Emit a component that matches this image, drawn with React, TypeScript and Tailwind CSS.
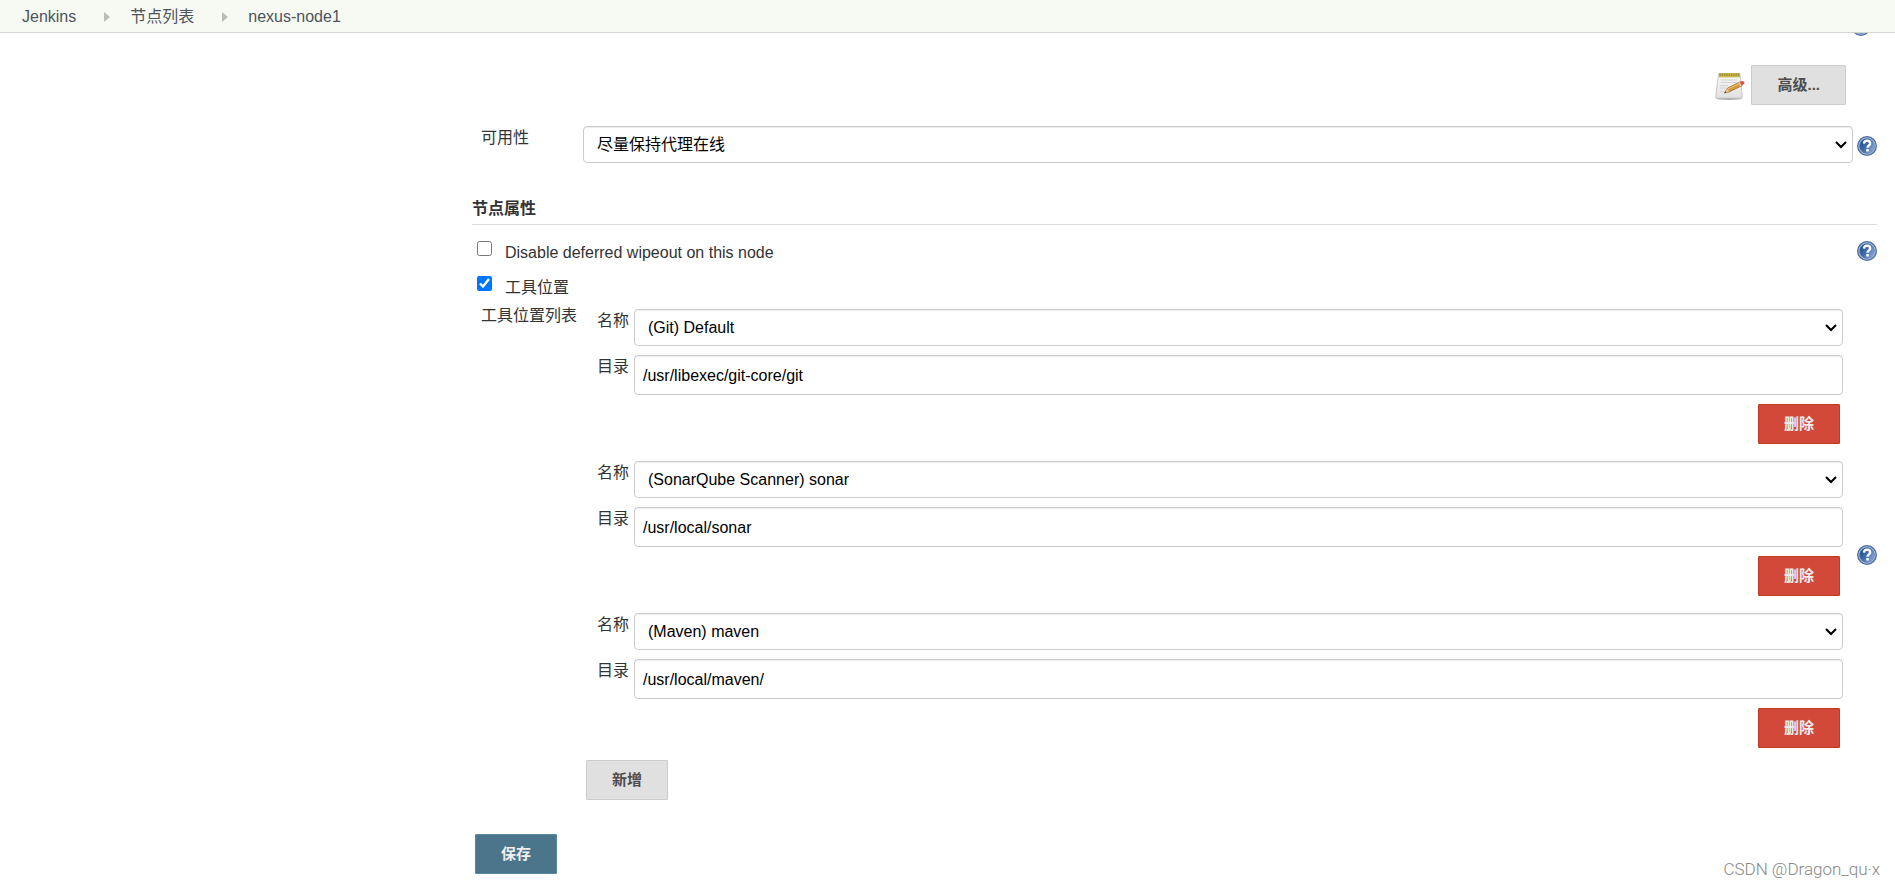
import { useId, useState } from "react";
import type { ComponentProps } from "react";

const crumbs = ["Jenkins", "节点列表", "nexus-node1"];

const initialTools = [
  { name: "(Git) Default", home: "/usr/libexec/git-core/git" },
  { name: "(SonarQube Scanner) sonar", home: "/usr/local/sonar" },
  { name: "(Maven) maven", home: "/usr/local/maven/" },
];

const toolNames = initialTools.map((t) => t.name);

const field =
  "w-full rounded border border-[#ccc] bg-white text-base text-black shadow-[inset_0_1px_1px_rgba(0,0,0,0.075)]";
const button = "h-10 rounded-[1px] border px-[25px] text-[15px] font-bold";

function HelpIcon() {
  const id = useId();
  return (
    <svg viewBox="0 0 20 20" className="block size-5" aria-hidden="true">
      <defs>
        <linearGradient id={id} x1="0" y1="0.2" x2="1" y2="0.8">
          <stop offset="0" stopColor="#1f4c8f" />
          <stop offset="0.5" stopColor="#4470ad" />
          <stop offset="1" stopColor="#8fb0da" />
        </linearGradient>
      </defs>
      <circle cx="10" cy="10" r="9.3" fill="#b3c6e0" stroke="#48699b" strokeWidth="1.3" />
      <circle cx="10" cy="10" r="7.5" fill={`url(#${id})`} stroke="#5f82b3" strokeWidth="0.6" />
      <path
        d="M7 7.600C7.100 5.600 8.300 4.700 10.100 4.700c1.800 0 3.100 1 3.100 2.700 0 2.100-2.700 2.100-2.700 4.400"
        fill="none"
        stroke="#fff"
        strokeWidth="2.300"
      />
      <rect x="9.200" y="13.100" width="2.600" height="2.400" fill="#fff" />
    </svg>
  );
}

function HelpLink() {
  return (
    <a href="#help" aria-label="帮助" className="block w-5 shrink-0">
      <HelpIcon />
    </a>
  );
}

function NotepadIcon() {
  return (
    <svg viewBox="0 0 30 28" className="h-7 w-[30px]" aria-hidden="true">
      <defs>
        <linearGradient id="paper" x1="0" y1="0" x2="0" y2="1">
          <stop offset="0" stopColor="#fbfbfa" />
          <stop offset="1" stopColor="#dfe0df" />
        </linearGradient>
      </defs>
      <ellipse cx="14" cy="26.6" rx="13" ry="1.300" fill="#a9a9a7" />
      <path
        d="M3.500 2h21.500l2.300 23.200a1 1 0 0 1-1 1H1.700a1 1 0 0 1-1-1z"
        fill="url(#paper)"
        stroke="#bdbdbb"
        strokeWidth="0.8"
      />
      <path d="M4 1h21v4.400H4z" fill="#cbb950" />
      <path d="M4.500 2.700h20" stroke="#a08f35" strokeWidth="2.600" strokeDasharray="1.300 1" />
      <path d="M5.500 8h17M5.500 10.500h16M5 13.500h8M5 16h6M5 19.500h4" stroke="#d0d3d3" strokeWidth="1.200" />
      <path d="M9.500 20.800l3-4.700L25.200 9.800l1.900 3.800L14 20z" fill="#d99a3f" stroke="#a06a28" strokeWidth="0.8" />
      <path d="M13 16.900L25.500 10.900" stroke="#efc47c" strokeWidth="1" />
      <path d="M9.500 21l2.700-4.400 1.800 2.900z" fill="#dcc9a2" />
      <path d="M9 21.400l1.500-2.200 1 1.400z" fill="#444" />
      <path d="M24.100 10.400l1.700 3.600" stroke="#d8d5cf" strokeWidth="1.300" />
      <path d="M25.200 9.800l2-.8c1.600-.4 2.900 1.700 1.900 3.100l-2.300 1.400z" fill="#e0524a" />
    </svg>
  );
}

function Separator() {
  return (
    <svg viewBox="0 0 6 10" className="mr-5 ml-7 h-[10px] w-[6px]" aria-hidden="true">
      <path d="M0 0l6 5-6 5z" fill="#babdb6" />
    </svg>
  );
}

function Select(props: ComponentProps<"select">) {
  return (
    <div className="relative flex-1">
      <select {...props} className={`${field} block h-[37px] appearance-none pt-px pr-8 pl-[13px]`} />
      <svg
        viewBox="0 0 12 8"
        className="pointer-events-none absolute top-[15px] right-[6px] h-2 w-3"
        aria-hidden="true"
      >
        <path d="M1 1l5 5 5-5" fill="none" stroke="#000" strokeWidth="2.100" />
      </svg>
    </div>
  );
}

export default function App() {
  const [tools, setTools] = useState(initialTools);
  const [wipeout, setWipeout] = useState(false);
  const [locations, setLocations] = useState(true);

  const update = (i: number, patch: Partial<(typeof initialTools)[number]>) =>
    setTools((list) => list.map((t, n) => (n === i ? { ...t, ...patch } : t)));

  return (
    <div className="relative min-h-screen bg-white font-['Liberation_Sans','Noto_Sans_CJK_SC',sans-serif] text-base leading-6 text-[#333]">
      <header className="fixed inset-x-0 top-0 z-10 flex h-[33px] items-center border-b border-[#d3d7cf] bg-[#f6faf2] pt-px pl-[22px] text-[#4d545d]">
        {crumbs.map((c, i) => (
          <div key={c} className="flex items-center">
            {i > 0 && <Separator />}
            <a href="#crumb">{c}</a>
          </div>
        ))}
      </header>

      <main className="pt-4 pr-[18px] pl-[472px]">
        <div className="flex justify-end pr-[6px]">
          <HelpLink />
        </div>

        <div className="mt-[29px] flex items-center justify-end gap-[6px] pr-[31px]">
          <div className="pt-[2px]">
            <NotepadIcon />
          </div>
          <button type="button" className={`${button} border-[#ccc] bg-[#e0e0e0] text-[#4d4d4d]`}>
            高级...
          </button>
        </div>

        <div className="mt-[21px] flex items-start">
          <label htmlFor="availability" className="w-[111px] pl-[9px]">
            可用性
          </label>
          <Select id="availability">
            <option>尽量保持代理在线</option>
          </Select>
          <div className="pt-[10px] pl-1">
            <HelpLink />
          </div>
        </div>

        <h2 className="mt-[34px] border-b border-[#ddd] pb-[3px] font-bold">节点属性</h2>

        <div className="mt-4 flex items-start">
          <input
            id="wipeout"
            type="checkbox"
            checked={wipeout}
            onChange={(e) => setWipeout(e.target.checked)}
            className="ml-[5px] size-[15px]"
          />
          <label htmlFor="wipeout" className="ml-[13px] flex-1">
            Disable deferred wipeout on this node
          </label>
          <HelpLink />
        </div>

        <div className="mt-[11px] flex items-start">
          <input
            id="locations"
            type="checkbox"
            checked={locations}
            onChange={(e) => setLocations(e.target.checked)}
            className="ml-[5px] size-[15px]"
          />
          <label htmlFor="locations" className="ml-[13px]">
            工具位置
          </label>
        </div>

        <div className="mt-1 flex items-start">
          <div className="w-[114px] pl-[9px] whitespace-nowrap">工具位置列表</div>
          <div className="flex flex-1 items-center pt-[5px]">
            <div className="flex-1 pr-[14px]">
              <div className="flex flex-col gap-[17px]">
                {tools.map((t, i) => (
                  <div key={i} className="grid grid-cols-[48px_1fr] gap-y-[9px]">
                    <label htmlFor={`name-${i}`} className="pl-[11px]">
                      名称
                    </label>
                    <Select
                      id={`name-${i}`}
                      value={t.name}
                      onChange={(e) => update(i, { name: e.target.value })}
                    >
                      {toolNames.map((n) => (
                        <option key={n}>{n}</option>
                      ))}
                    </Select>
                    <label htmlFor={`home-${i}`} className="pl-[11px]">
                      目录
                    </label>
                    <input
                      id={`home-${i}`}
                      type="text"
                      value={t.home}
                      onChange={(e) => update(i, { home: e.target.value })}
                      className={`${field} h-10 px-2 pt-px`}
                    />
                    <div className="col-span-2 flex justify-end pr-[3px]">
                      <button
                        type="button"
                        onClick={() => setTools(tools.filter((_, n) => n !== i))}
                        className={`${button} border-[#c03a2b] bg-[#d24939] text-[#eee]`}
                      >
                        删除
                      </button>
                    </div>
                  </div>
                ))}
              </div>
              <button
                type="button"
                onClick={() => setTools([...tools, { name: toolNames[0], home: "" }])}
                className={`${button} mt-3 border-[#ccc] bg-[#e0e0e0] text-[#4d4d4d]`}
              >
                新增
              </button>
            </div>
            <HelpLink />
          </div>
        </div>

        <button type="submit" className={`${button} mt-[34px] ml-[3px] border-[#5788a0] bg-[#4b758b] text-[#eee]`}>
          保存
        </button>
      </main>

      <div className="absolute right-[15px] bottom-[7px] font-[Roboto,sans-serif] text-[17px] font-light text-[#888]">
        CSDN @Dragon_qu·x
      </div>
    </div>
  );
}
